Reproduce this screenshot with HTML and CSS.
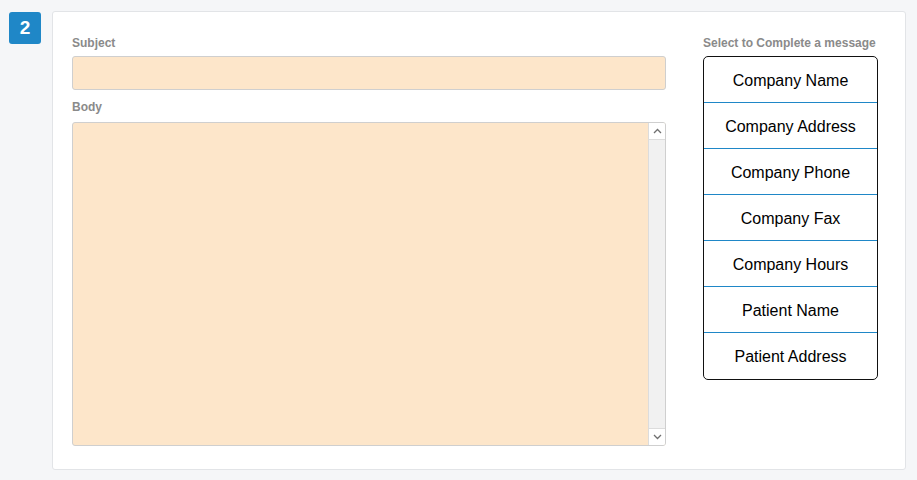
FILE: index.html
```html
<!DOCTYPE html>
<html>
<head>
<meta charset="utf-8">
<link rel="stylesheet" href="styles.css">
</head>
<body>
<div class="page">
  <div class="step-badge">2</div>
  <div class="card">
    <div class="main-col">
      <div class="field">
        <label class="field-label">Subject</label>
        <div class="input"></div>
      </div>
      <div class="field field-body">
        <label class="field-label">Body</label>
        <div class="textarea">
          <div class="textarea-content"></div>
          <div class="scrollbar">
            <div class="scroll-btn scroll-btn-up">
              <svg width="9" height="6" viewBox="0 0 9 6"><path d="M1 5 L4.5 1.5 L8 5" fill="none" stroke="#6f6f6f" stroke-width="1.3"/></svg>
            </div>
            <div class="scroll-track"></div>
            <div class="scroll-btn scroll-btn-down">
              <svg width="9" height="6" viewBox="0 0 9 6"><path d="M1 1 L4.5 4.5 L8 1" fill="none" stroke="#6f6f6f" stroke-width="1.3"/></svg>
            </div>
          </div>
        </div>
      </div>
    </div>
    <div class="side-col">
      <div class="field-label side-label">Select to Complete a message</div>
      <ul class="token-list">
        <li class="token">Company Name</li>
        <li class="token">Company Address</li>
        <li class="token">Company Phone</li>
        <li class="token">Company Fax</li>
        <li class="token">Company Hours</li>
        <li class="token">Patient Name</li>
        <li class="token">Patient Address</li>
      </ul>
    </div>
  </div>
</div>
</body>
</html>
```

FILE: styles.css
```css
html, body {
  margin: 0;
  padding: 0;
  background: #f5f6f8;
  font-family: "Liberation Sans", Arial, Helvetica, sans-serif;
}

.page {
  display: flex;
  align-items: flex-start;
  gap: 11px;
  padding: 11px 11px 10px 9px;
  height: 459px;
}

.step-badge {
  width: 32px;
  height: 32px;
  margin-top: 1px;
  background: #1f87c7;
  color: #fff;
  border-radius: 3px;
  font-weight: bold;
  font-size: 19px;
  line-height: 32px;
  text-align: center;
  flex: none;
}

.card {
  flex: 1;
  height: 459px;
  box-sizing: border-box;
  background: #fff;
  border: 1px solid #e2e4e7;
  border-radius: 3px;
  display: flex;
  gap: 37px;
  padding: 23px 27px 23px 19px;
}

.main-col {
  flex: 1;
  display: flex;
  flex-direction: column;
}

.field-label {
  display: block;
  font-size: 12px;
  font-weight: bold;
  line-height: 16px;
  color: #8a8a8a;
  margin-bottom: 5px;
}

.input {
  height: 34px;
  box-sizing: border-box;
  background: #fde6ca;
  border: 1px solid #cfcfcf;
  border-radius: 3px;
}

.field-body {
  margin-top: 9px;
}

.field-body .field-label {
  margin-bottom: 7px;
}

.textarea {
  height: 324px;
  box-sizing: border-box;
  background: #fde6ca;
  border: 1px solid #cfcfcf;
  border-radius: 3px;
  display: flex;
  overflow: hidden;
}

.textarea-content {
  flex: 1;
}

.scrollbar {
  width: 16px;
  display: flex;
  flex-direction: column;
  border-left: 1px solid #dcdcdc;
  background: #f1f1f1;
}

.scroll-btn {
  height: 16px;
  background: #fff;
  display: flex;
  align-items: center;
  justify-content: center;
}

.scroll-btn-up {
  border-bottom: 1px solid #dcdcdc;
}

.scroll-btn-down {
  border-top: 1px solid #dcdcdc;
}

.scroll-track {
  flex: 1;
  background: #f1f1f1;
}

.side-col {
  width: 175px;
  flex: none;
}

.token-list {
  list-style: none;
  margin: 0;
  padding: 0;
  border: 1px solid #111;
  border-radius: 5px;
  overflow: hidden;
}

.token {
  height: 46px;
  box-sizing: border-box;
  padding-top: 1px;
  line-height: 45px;
  text-align: center;
  font-size: 16px;
  color: #000;
  border-top: 1px solid #1f87c7;
}

.token:first-child {
  border-top: none;
  height: 45px;
}

.token:last-child {
  height: 47px;
}
```
